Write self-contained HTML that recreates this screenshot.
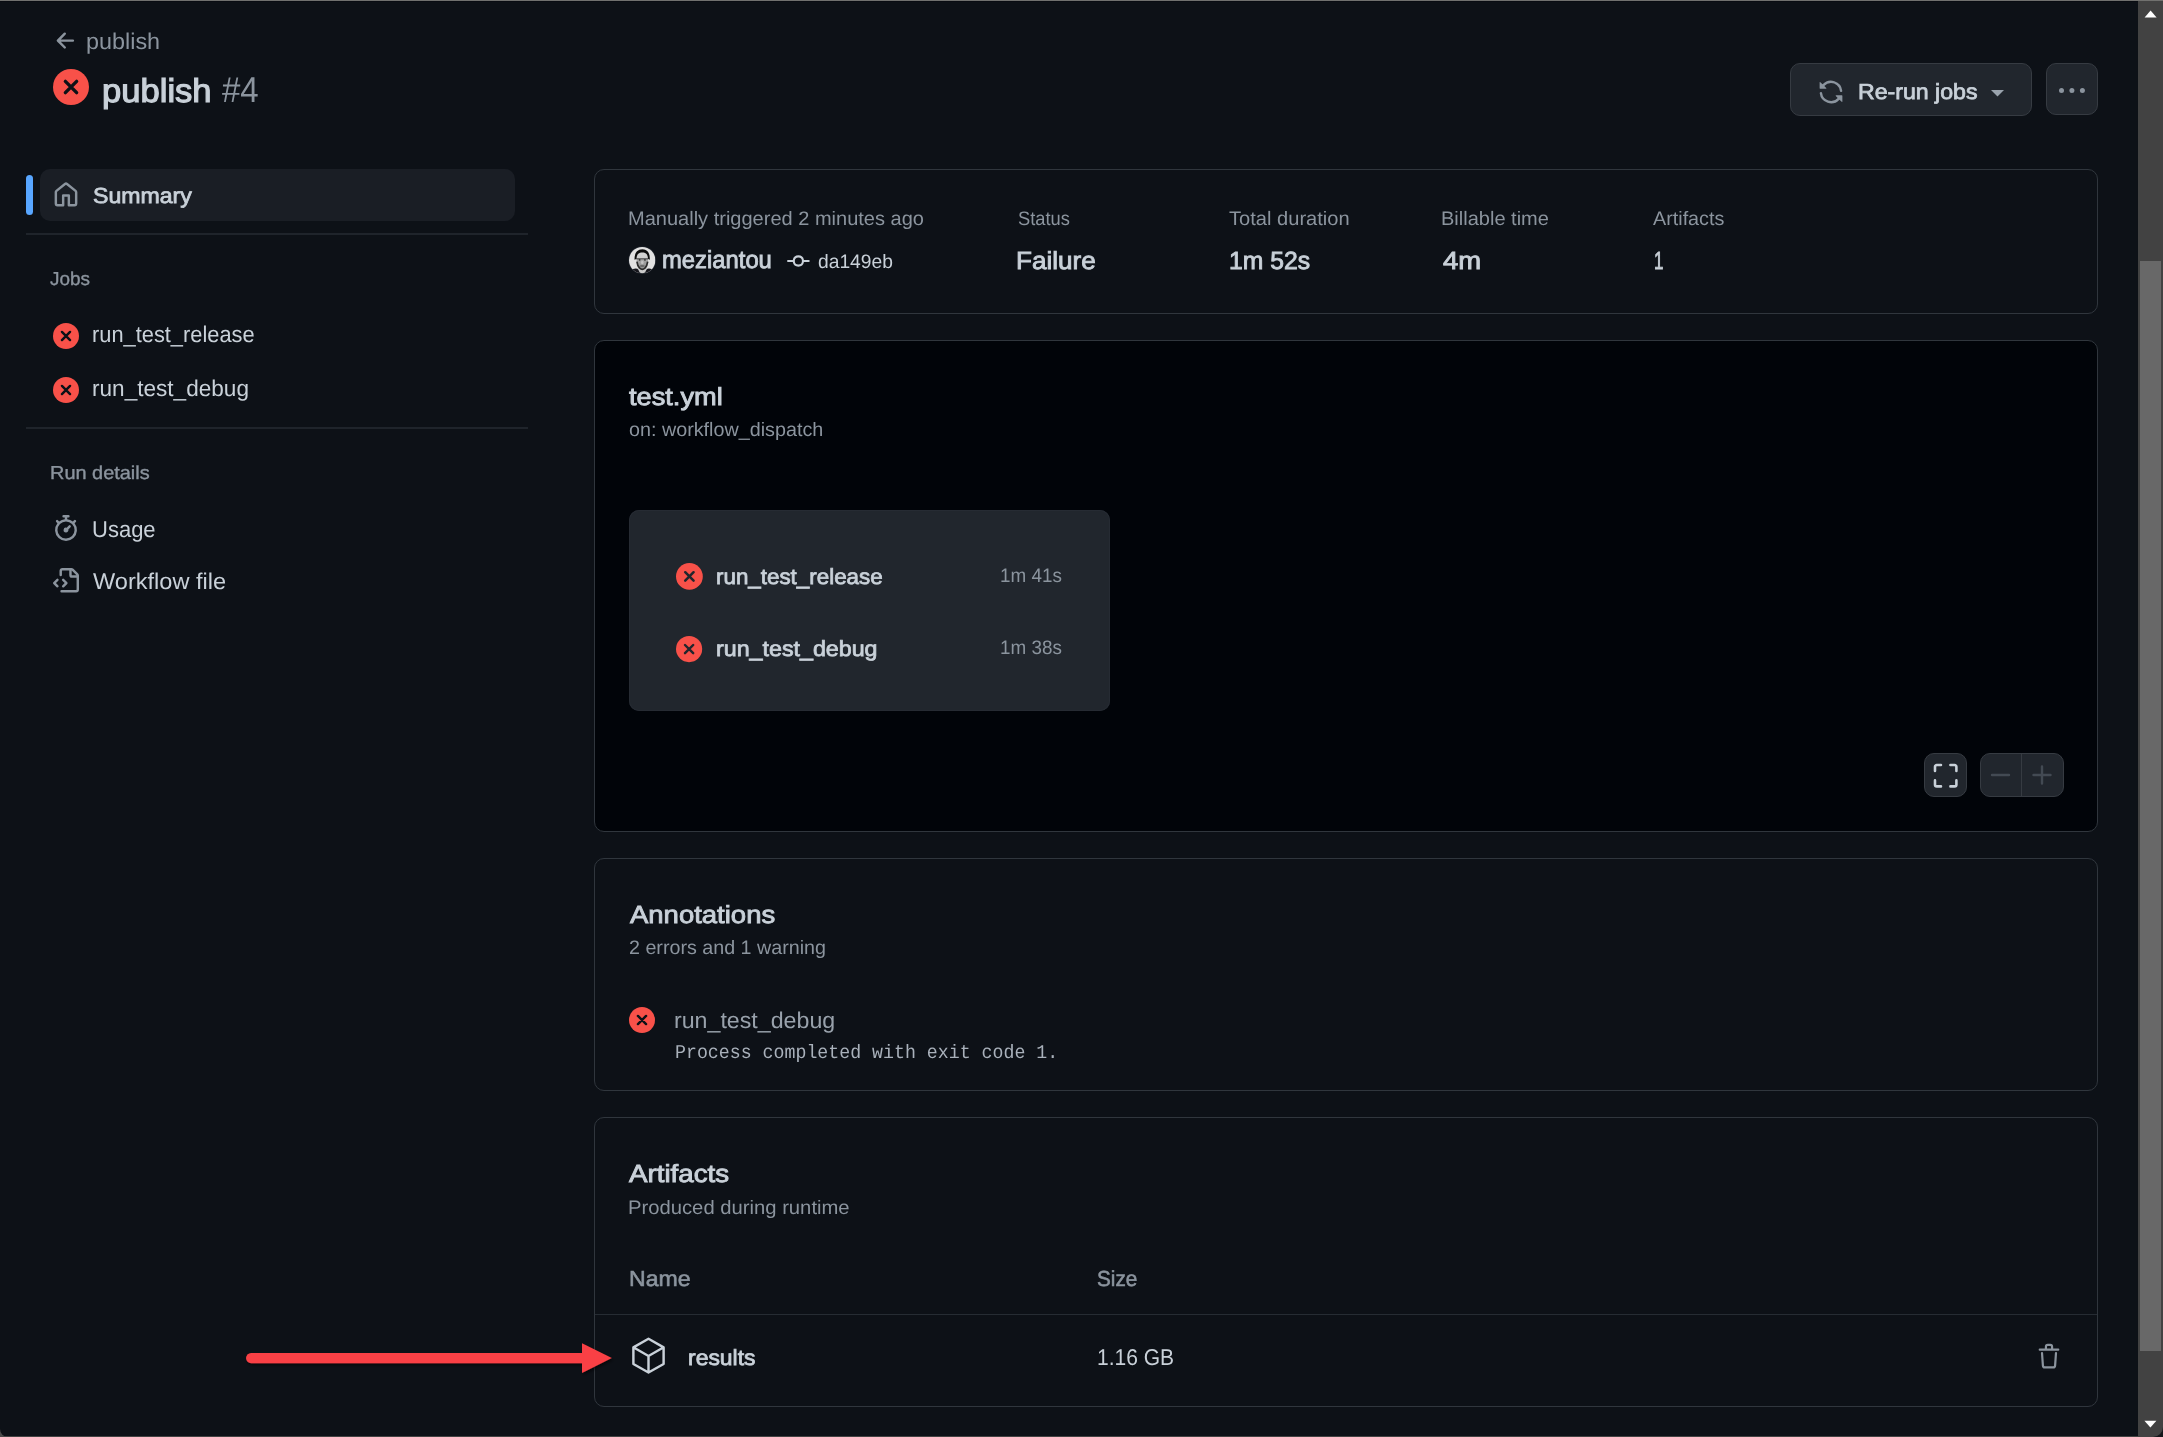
<!DOCTYPE html>
<html lang="en"><head><meta charset="utf-8"><title>publish #4 · Workflow run</title>
<style>
html,body{margin:0;padding:0;background:#0d1117;}
body{width:2163px;height:1437px;overflow:hidden;font-family:"Liberation Sans",sans-serif;}
#root{position:relative;width:2163px;height:1437px;overflow:hidden;background:#0d1117;text-rendering:geometricPrecision;-webkit-font-smoothing:antialiased;}
#root *{box-sizing:border-box;}
.a{position:absolute;}
.t{position:absolute;white-space:pre;transform-origin:0 0;font-family:"Liberation Sans",sans-serif;}
.t.m{font-family:"Liberation Mono",monospace;}
svg{position:absolute;overflow:visible;}
.card{position:absolute;left:594px;width:1504px;border:1px solid #30363d;border-radius:10px;}
.btn{position:absolute;background:#21262d;border:1px solid #363b42;border-radius:10px;}
.hr{position:absolute;left:26px;width:502px;height:2px;background:#1f242b;}
</style></head>
<body>
<div id="root">
<div aria-hidden="true">
<div class="a" style="left:0;top:0;width:2163px;height:1px;background:#71716f"></div>
<div class="a" style="left:0;top:1px;width:2138px;height:1px;background:#090c12"></div>
<div class="a" style="left:2138px;top:1px;width:25px;height:1436px;background:#424242"></div>
<div class="a" style="left:2140px;top:261px;width:21px;height:1090px;background:#686868"></div>
<svg style="left:2138px;top:0" width="25" height="1437" viewBox="0 0 25 1437"><path d="M6.6 17.4 18.6 17.4 12.6 10.4Z" fill="#fff"/><path d="M6.4 1420.8 18.4 1420.8 12.4 1427.6Z" fill="#fff"/></svg>
<div class="a" style="left:0;top:1436px;width:2163px;height:1px;background:#434343"></div>

<svg style="left:2153px;top:1427px" width="10" height="10" viewBox="0 0 10 10"><path d="M10 0V10H0A10 10 0 0 0 10 0Z" fill="#14161a"/></svg>
<svg style="left:0;top:1429px" width="8" height="8" viewBox="0 0 8 8"><path d="M0 0V8H8A8 8 0 0 1 0 0Z" fill="#4a4a4a"/></svg>
</div>
<header>
<svg style="left:53.2px;top:27.6px" width="26" height="26" viewBox="0 0 16 16" fill="#8b949e"><path d="M7.78 12.53a.75.75 0 0 1-1.06 0L2.47 8.28a.75.75 0 0 1 0-1.06l4.25-4.25a.751.751 0 0 1 1.042.018.751.751 0 0 1 .018 1.042L4.81 7h7.44a.75.75 0 0 1 0 1.5H4.81l2.97 2.97a.75.75 0 0 1 0 1.06Z"/></svg>
<svg style="left:52.9px;top:69.1px" width="36" height="36" viewBox="0 0 16 16"><circle cx="8" cy="8" r="8" fill="#f85149"/><path d="M5.5 5.5l5 5M10.5 5.5l-5 5" stroke="#0d1117" stroke-width="1.5" stroke-linecap="round"/></svg>
<span class="t" style="left:85.77px;top:28.00px;font-size:22.75px;line-height:27px;font-weight:400;color:#8b949e;transform:scaleX(1.0278)">publish</span>
<span class="t" style="left:102.21px;top:70.91px;font-size:33px;line-height:40px;font-weight:400;-webkit-text-stroke:1.16px #c9d1d9;color:#c9d1d9;transform:scaleX(1.0481)">publish</span>
<span class="t" style="left:221.90px;top:67.91px;font-size:36px;line-height:43px;font-weight:400;color:#8b949e;transform:scaleX(0.9174)">#4</span>
<div class="btn" style="left:1790px;top:63px;width:242px;height:53px"></div>
<svg style="left:1818px;top:78.5px" width="26" height="26" viewBox="0 0 16 16" fill="#8b949e"><path d="M1.705 8.005a.75.75 0 0 1 .834.656 5.5 5.5 0 0 0 9.592 2.97l-1.204-1.204a.25.25 0 0 1 .177-.427h3.646a.25.25 0 0 1 .25.25v3.646a.25.25 0 0 1-.427.177l-1.38-1.38A7.002 7.002 0 0 1 1.05 8.84a.75.75 0 0 1 .656-.834ZM8 2.5a5.487 5.487 0 0 0-4.131 1.869l1.204 1.204A.25.25 0 0 1 4.896 6H1.25A.25.25 0 0 1 1 5.75V2.104a.25.25 0 0 1 .427-.177l1.38 1.38A7.002 7.002 0 0 1 14.95 7.16a.75.75 0 0 1-1.49.178A5.5 5.5 0 0 0 8 2.5Z"/></svg>
<svg style="left:1991px;top:90px" width="13" height="7" viewBox="0 0 13 7"><path d="M0 0h13L6.5 6.6Z" fill="#9aa3ad"/></svg>
<div class="btn" style="left:2046px;top:63px;width:52px;height:52px"></div>
<svg style="left:2046px;top:63px" width="52" height="52" viewBox="0 0 52 52" fill="#8b949e"><circle cx="15.5" cy="27.4" r="2.5"/><circle cx="25.9" cy="27.4" r="2.5"/><circle cx="36.4" cy="27.4" r="2.5"/></svg>
<span class="t" style="left:1857.94px;top:79.21px;font-size:21.75px;line-height:26px;font-weight:400;-webkit-text-stroke:0.76px #c9d1d9;color:#c9d1d9;transform:scaleX(1.0631)">Re-run jobs</span>
</header>
<nav aria-label="Workflow run">
<div class="a" style="left:26px;top:175px;width:7px;height:40px;border-radius:3.5px;background:#58a6ff"></div>
<div class="a" style="left:40px;top:169px;width:475px;height:52px;border-radius:10px;background:#1a1e25"></div>
<svg style="left:53px;top:181.8px" width="26" height="26" viewBox="0 0 16 16" fill="#8b949e"><path d="M6.906.664a1.749 1.749 0 0 1 2.187 0l5.25 4.2c.415.332.657.835.657 1.367v7.019A1.75 1.75 0 0 1 13.25 15h-3.5a.75.75 0 0 1-.75-.75V9H7v5.25a.75.75 0 0 1-.75.75h-3.5A1.75 1.75 0 0 1 1 13.25V6.23c0-.531.242-1.034.657-1.366l5.25-4.2Zm1.25 1.171a.25.25 0 0 0-.312 0l-5.25 4.2a.25.25 0 0 0-.094.196v7.019c0 .138.112.25.25.25H5.5V8.25a.75.75 0 0 1 .75-.75h3.5a.75.75 0 0 1 .75.75v5.25h2.75a.25.25 0 0 0 .25-.25V6.23a.25.25 0 0 0-.094-.195Z"/></svg>
<div class="hr" style="top:233px"></div>
<svg style="left:53px;top:323px" width="26" height="26" viewBox="0 0 16 16"><circle cx="8" cy="8" r="8" fill="#f85149"/><path d="M5.5 5.5l5 5M10.5 5.5l-5 5" stroke="#0d1117" stroke-width="1.5" stroke-linecap="round"/></svg>
<svg style="left:53px;top:377px" width="26" height="26" viewBox="0 0 16 16"><circle cx="8" cy="8" r="8" fill="#f85149"/><path d="M5.5 5.5l5 5M10.5 5.5l-5 5" stroke="#0d1117" stroke-width="1.5" stroke-linecap="round"/></svg>
<div class="hr" style="top:427px"></div>
<svg style="left:53px;top:515px" width="26" height="26" viewBox="0 0 16 16" fill="#8b949e"><path d="M5.75.75A.75.75 0 0 1 6.5 0h3a.75.75 0 0 1 0 1.5h-.75v1l-.001.041a6.724 6.724 0 0 1 3.464 1.435l.007-.006.75-.75a.749.749 0 0 1 1.275.326.749.749 0 0 1-.215.734l-.75.75-.006.007a6.75 6.75 0 1 1-10.548 0L2.72 5.03l-.75-.75a.751.751 0 0 1 .018-1.042.751.751 0 0 1 1.042-.018l.75.75.007.006A6.72 6.72 0 0 1 7.25 2.541V1.5H6.5a.75.75 0 0 1-.75-.75ZM8 14.5a5.25 5.25 0 1 0-.001-10.501A5.25 5.25 0 0 0 8 14.5Zm.389-6.7 1.33-1.33a.75.75 0 1 1 1.061 1.06L9.45 8.861A1.503 1.503 0 0 1 8 10.75a1.499 1.499 0 1 1 .389-2.95Z"/></svg>
<svg style="left:53px;top:568px" width="26" height="26" viewBox="0 0 16 16" fill="#8b949e"><path d="M4 1.75C4 .784 4.784 0 5.75 0h5.586c.464 0 .909.184 1.237.513l2.914 2.914c.329.328.513.773.513 1.237v8.586A1.75 1.75 0 0 1 14.25 15h-9a.75.75 0 0 1 0-1.5h9a.25.25 0 0 0 .25-.25V6h-2.75A1.75 1.75 0 0 1 10 4.25V1.5H5.75a.25.25 0 0 0-.25.25v2.5a.75.75 0 0 1-1.5 0Zm1.72 4.97a.75.75 0 0 1 1.06 0l2 2a.75.75 0 0 1 0 1.06l-2 2a.749.749 0 0 1-1.275-.326.749.749 0 0 1 .215-.734l1.47-1.47-1.47-1.47a.75.75 0 0 1 0-1.06ZM3.28 7.78 1.81 9.25l1.47 1.47a.751.751 0 0 1-.018 1.042.751.751 0 0 1-1.042.018l-2-2a.75.75 0 0 1 0-1.06l2-2a.751.751 0 0 1 1.042.018.751.751 0 0 1 .018 1.042Zm8.22-6.218V4.25c0 .138.112.25.25.25h2.688l-.011-.013-2.914-2.914-.013-.011Z"/></svg>
<span class="t" style="left:93.20px;top:183.11px;font-size:21.75px;line-height:26px;font-weight:400;-webkit-text-stroke:0.76px #c9d1d9;color:#c9d1d9;transform:scaleX(1.0624)">Summary</span>
<span class="t" style="left:49.59px;top:267.61px;font-size:18.75px;line-height:22px;font-weight:400;-webkit-text-stroke:0.38px #8b949e;color:#8b949e;transform:scaleX(1.0100)">Jobs</span>
<span class="t" style="left:92.04px;top:320.50px;font-size:22.75px;line-height:27px;font-weight:400;color:#c9d1d9;transform:scaleX(0.9594)">run_test_release</span>
<span class="t" style="left:92.01px;top:374.80px;font-size:22.75px;line-height:27px;font-weight:400;color:#c9d1d9;transform:scaleX(0.9926)">run_test_debug</span>
<span class="t" style="left:49.54px;top:461.80px;font-size:18.75px;line-height:22px;font-weight:400;-webkit-text-stroke:0.38px #8b949e;color:#8b949e;transform:scaleX(1.0624)">Run details</span>
<span class="t" style="left:92.33px;top:515.71px;font-size:22.75px;line-height:27px;font-weight:400;color:#c9d1d9;transform:scaleX(0.9671)">Usage</span>
<span class="t" style="left:93.00px;top:568.00px;font-size:22.75px;line-height:27px;font-weight:400;color:#c9d1d9;transform:scaleX(1.0354)">Workflow file</span>
</nav>
<main>
<section aria-label="Summary">
<div class="card" style="top:169px;height:145px"></div>
<svg style="left:628.6px;top:246.8px" width="26.4" height="26.4" viewBox="0 0 26 26"><defs><clipPath id="av"><circle cx="13" cy="13" r="13"/></clipPath><filter id="avb" x="-10%" y="-10%" width="120%" height="120%"><feGaussianBlur stdDeviation="0.55"/></filter><linearGradient id="avf" x1="0" y1="0" x2="0" y2="1"><stop offset="0" stop-color="#d6d6d6"/><stop offset=".36" stop-color="#cdcdcd"/><stop offset=".5" stop-color="#a2a2a2"/><stop offset="1" stop-color="#909090"/></linearGradient></defs><circle cx="13" cy="13" r="13.700" fill="#1d222a"/><g clip-path="url(#av)"><rect width="26" height="26" fill="#e1e1e1"/><g filter="url(#avb)"><path d="M8.800 20h8.800l1.400 7H7.400Z" fill="#cbcbcb"/><path d="M-1 27V22.700L6.500 21.200Q8.500 21.100 9.200 22.500L10.500 25Q13 26.600 15.800 25L17.200 22.500Q18 21.100 19.800 21.200L27 22.700V27Z" fill="#13161b"/><path d="M7.400 11C7.400 7 9.500 5.200 13.100 5.200S18.800 7 18.800 11C18.800 15 18 18 16.200 20.200Q14.600 22 13.100 22T10 20.200C8.200 18 7.400 15 7.400 11Z" fill="url(#avf)"/><path d="M5.500 12.500C5.200 5.400 8.700 2.200 13.100 2.200s7.700 3.200 7.400 10.300l-1.800-.9c0-4.300-2.100-6.200-5.600-6.200s-5.600 1.900-5.600 6.200Z" fill="#0c0c0c"/><path d="M7.800 14.500C8.200 17.500 9 19.300 10.300 20.600Q11.800 22 13.100 22T15.900 20.600C17.200 19.300 18 17.500 18.400 14.500" fill="none" stroke="#2c2c2c" stroke-width="1.700"/><ellipse cx="13.100" cy="15.300" rx="1.300" ry="1.700" fill="#c2c2c2"/><ellipse cx="13.100" cy="18.700" rx="2.400" ry="1" fill="#666"/><circle cx="10.500" cy="12.700" r=".9" fill="#3d3d3d"/><circle cx="15.700" cy="12.700" r=".9" fill="#3d3d3d"/><path d="M7.200 11.700h11.800" stroke="#1a1a1a" stroke-width=".9"/></g></g></svg>
<svg style="left:787px;top:250px" width="22.75" height="22.75" viewBox="0 0 16 16" fill="#c9d1d9"><path d="M11.930 8.500a4.002 4.002 0 0 1-7.860 0H.75a.75.75 0 0 1 0-1.500h3.320a4.002 4.002 0 0 1 7.860 0h3.320a.75.75 0 0 1 0 1.500Zm-1.430-.75a2.500 2.500 0 1 0-5 0 2.500 2.500 0 0 0 5 0Z"/></svg>
<span class="t" style="left:628.07px;top:207.91px;font-size:19.5px;line-height:23px;font-weight:400;color:#8b949e;transform:scaleX(1.0265)">Manually triggered 2 minutes ago</span>
<span class="t" style="left:661.85px;top:245.91px;font-size:24.75px;line-height:30px;font-weight:400;-webkit-text-stroke:0.87px #c9d1d9;color:#c9d1d9;transform:scaleX(0.9621)">meziantou</span>
<span class="t" style="left:817.50px;top:250.91px;font-size:19.5px;line-height:23px;font-weight:400;color:#c9d1d9;transform:scaleX(0.9873)">da149eb</span>
<span class="t" style="left:1017.50px;top:207.61px;font-size:19.5px;line-height:23px;font-weight:400;color:#8b949e;transform:scaleX(0.9382)">Status</span>
<span class="t" style="left:1016.35px;top:246.61px;font-size:24.75px;line-height:30px;font-weight:400;-webkit-text-stroke:0.87px #c9d1d9;color:#c9d1d9;transform:scaleX(1.0535)">Failure</span>
<span class="t" style="left:1228.90px;top:207.61px;font-size:19.5px;line-height:23px;font-weight:400;color:#8b949e;transform:scaleX(1.0307)">Total duration</span>
<span class="t" style="left:1228.83px;top:246.61px;font-size:24.75px;line-height:30px;font-weight:400;-webkit-text-stroke:0.87px #c9d1d9;color:#c9d1d9;transform:scaleX(0.9981)">1m 52s</span>
<span class="t" style="left:1441.47px;top:207.61px;font-size:19.5px;line-height:23px;font-weight:400;color:#8b949e;transform:scaleX(1.0263)">Billable time</span>
<span class="t" style="left:1442.58px;top:246.61px;font-size:24.75px;line-height:30px;font-weight:400;-webkit-text-stroke:0.87px #c9d1d9;color:#c9d1d9;transform:scaleX(1.1091)">4m</span>
<span class="t" style="left:1653.00px;top:207.61px;font-size:19.5px;line-height:23px;font-weight:400;color:#8b949e;transform:scaleX(1.0130)">Artifacts</span>
<span class="t" style="left:1653.51px;top:246.61px;font-size:24.75px;line-height:30px;font-weight:400;-webkit-text-stroke:0.87px #c9d1d9;color:#c9d1d9;transform:scaleX(0.6840)">1</span>
</section>
<section aria-label="Workflow graph">
<div class="card" style="top:340px;height:492px;background:#010409"></div>
<div class="a" style="left:629px;top:510px;width:481px;height:201px;border-radius:10px;background:#21262d;box-shadow:0 0 0 1px #262b33 inset"></div>
<svg style="left:676.2px;top:563.2px" width="26.8" height="26.8" viewBox="0 0 16 16"><circle cx="8" cy="8" r="8" fill="#f85149"/><path d="M5.500 5.500l5 5M10.500 5.500l-5 5" stroke="#21262d" stroke-width="1.500" stroke-linecap="round"/></svg>
<svg style="left:676.3px;top:635.8px" width="26.2" height="26.2" viewBox="0 0 16 16"><circle cx="8" cy="8" r="8" fill="#f85149"/><path d="M5.500 5.500l5 5M10.500 5.500l-5 5" stroke="#21262d" stroke-width="1.500" stroke-linecap="round"/></svg>
<div class="btn" style="left:1924px;top:753px;width:43px;height:44px"></div>
<svg style="left:1931.6px;top:761.6px" width="27.4" height="27.4" viewBox="0 0 16 16" fill="#c9d1d9"><path d="M1.750 10a.75.75 0 0 1 .75.75v2.500c0 .138.112.25.25.25h2.500a.75.75 0 0 1 0 1.500h-2.500A1.750 1.750 0 0 1 1 13.250v-2.500a.75.75 0 0 1 .75-.75Zm12.500 0a.75.75 0 0 1 .75.75v2.500A1.750 1.750 0 0 1 13.250 15h-2.500a.75.75 0 0 1 0-1.500h2.500a.25.25 0 0 0 .25-.25v-2.500a.75.75 0 0 1 .75-.75ZM2.750 2.500a.25.25 0 0 0-.25.25v2.500a.75.75 0 0 1-1.500 0v-2.500C1 1.784 1.784 1 2.750 1h2.500a.75.75 0 0 1 0 1.500ZM10 1.750a.75.75 0 0 1 .75-.75h2.500c.966 0 1.750.784 1.750 1.750v2.500a.75.75 0 0 1-1.500 0v-2.500a.25.25 0 0 0-.25-.25h-2.500a.75.75 0 0 1-.75-.75Z"/></svg>
<div class="btn" style="left:1980px;top:753px;width:84px;height:44px"></div>
<div class="a" style="left:2021px;top:754px;width:1px;height:42px;background:#363b42"></div>
<svg style="left:1980px;top:753px" width="84" height="44" viewBox="0 0 84 44" stroke="#434a53" stroke-width="2.400" stroke-linecap="round" fill="none"><path d="M12 22h17M53.500 22h17M62 13.500v17"/></svg>
<span class="t" style="left:629.38px;top:382.80px;font-size:24.75px;line-height:30px;font-weight:400;-webkit-text-stroke:0.87px #c9d1d9;color:#c9d1d9;transform:scaleX(1.0989)">test.yml</span>
<span class="t" style="left:628.70px;top:418.50px;font-size:19.5px;line-height:23px;font-weight:400;color:#8b949e;transform:scaleX(1.0125)">on: workflow_dispatch</span>
<span class="t" style="left:715.76px;top:563.61px;font-size:21.75px;line-height:26px;font-weight:400;-webkit-text-stroke:0.76px #c9d1d9;color:#c9d1d9;transform:scaleX(1.0285)">run_test_release</span>
<span class="t" style="left:1000.33px;top:564.91px;font-size:19.5px;line-height:23px;font-weight:400;color:#8b949e;transform:scaleX(0.9668)">1m 41s</span>
<span class="t" style="left:715.74px;top:635.91px;font-size:21.75px;line-height:26px;font-weight:400;-webkit-text-stroke:0.76px #c9d1d9;color:#c9d1d9;transform:scaleX(1.0685)">run_test_debug</span>
<span class="t" style="left:1000.33px;top:637.21px;font-size:19.5px;line-height:23px;font-weight:400;color:#8b949e;transform:scaleX(0.9668)">1m 38s</span>
</section>
<section aria-label="Annotations">
<div class="card" style="top:858px;height:233px"></div>
<svg style="left:629px;top:1007.300px" width="26" height="26" viewBox="0 0 16 16"><circle cx="8" cy="8" r="8" fill="#f85149"/><path d="M5.500 5.500l5 5M10.500 5.500l-5 5" stroke="#0d1117" stroke-width="1.500" stroke-linecap="round"/></svg>
<span class="t" style="left:629.58px;top:901.21px;font-size:24.75px;line-height:30px;font-weight:400;-webkit-text-stroke:0.87px #c9d1d9;color:#c9d1d9;transform:scaleX(1.1104)">Annotations</span>
<span class="t" style="left:629.10px;top:937.00px;font-size:19.5px;line-height:23px;font-weight:400;color:#8b949e;transform:scaleX(1.0095)">2 errors and 1 warning</span>
<span class="t" style="left:674.48px;top:1006.80px;font-size:22.75px;line-height:27px;font-weight:400;color:#98a1ab;transform:scaleX(1.0194)">run_test_debug</span>
<span class="t m" style="left:674.56px;top:1041.61px;font-size:19.5px;line-height:23px;font-weight:400;color:#a9b1bb;transform:scaleX(0.9357)">Process completed with exit code 1.</span>
</section>
<section aria-label="Artifacts">
<div class="card" style="top:1117px;height:290px"></div>
<div class="a" style="left:595px;top:1314px;width:1502px;height:1px;background:#262c33"></div>
<svg style="left:629px;top:1336.4px" width="39" height="39" viewBox="0 0 24 24" fill="none" stroke="#c9d1d9" stroke-width="1.500" stroke-linejoin="round" stroke-linecap="round"><path d="M12 1.700 21.300 7v10.200L12 22.500 2.700 17.200V7ZM2.900 7.100 12 12.300l9.100-5.200M12 12.300v10"/></svg>
<svg style="left:2036px;top:1343px" width="26" height="26" viewBox="0 0 16 16" fill="none" stroke="#8b949e" stroke-width="1.350" stroke-linecap="round" stroke-linejoin="round"><path d="M2.300 4.100h11.400M6.100 3.900V2.500c0-.8.400-1.300 1.100-1.300h1.600c.7 0 1.100.5 1.100 1.300v1.400M3.700 6.200l.55 7.700c.05.700.5 1.100 1.100 1.100h5.300c.6 0 1.050-.4 1.100-1.100l.55-7.700"/></svg>
<span class="t" style="left:629.48px;top:1160.00px;font-size:24.75px;line-height:30px;font-weight:400;-webkit-text-stroke:0.87px #c9d1d9;color:#c9d1d9;transform:scaleX(1.1192)">Artifacts</span>
<span class="t" style="left:627.96px;top:1196.91px;font-size:19.5px;line-height:23px;font-weight:400;color:#8b949e;transform:scaleX(1.0378)">Produced during runtime</span>
<span class="t" style="left:628.94px;top:1265.61px;font-size:21.75px;line-height:26px;font-weight:400;-webkit-text-stroke:0.57px #8b949e;color:#8b949e;transform:scaleX(1.0611)">Name</span>
<span class="t" style="left:1096.87px;top:1265.61px;font-size:21.75px;line-height:26px;font-weight:400;-webkit-text-stroke:0.57px #8b949e;color:#8b949e;transform:scaleX(0.9514)">Size</span>
<span class="t" style="left:687.85px;top:1345.11px;font-size:21.75px;line-height:26px;font-weight:400;-webkit-text-stroke:0.76px #c9d1d9;color:#c9d1d9;transform:scaleX(1.0540)">results</span>
<span class="t" style="left:1096.78px;top:1344.11px;font-size:22.75px;line-height:27px;font-weight:400;color:#c9d1d9;transform:scaleX(0.9238)">1.16 GB</span>
</section>
</main>
<div aria-hidden="true">
<svg style="left:230px;top:1330px" width="400" height="60" viewBox="230 1330 400 60"><defs><filter id="sh" x="-5%" y="-30%" width="110%" height="180%"><feDropShadow dx="1.500" dy="2" stdDeviation="1.500" flood-color="#000" flood-opacity=".55"/></filter></defs><g filter="url(#sh)" fill="#f94144"><path d="M251.100 1353H583v10.200H251.100a5.100 5.100 0 0 1 0-10.200Z"/><path d="M582 1343.300 611.800 1358.100 582 1373Z"/></g></svg>
</div>
</div>
</body></html>
